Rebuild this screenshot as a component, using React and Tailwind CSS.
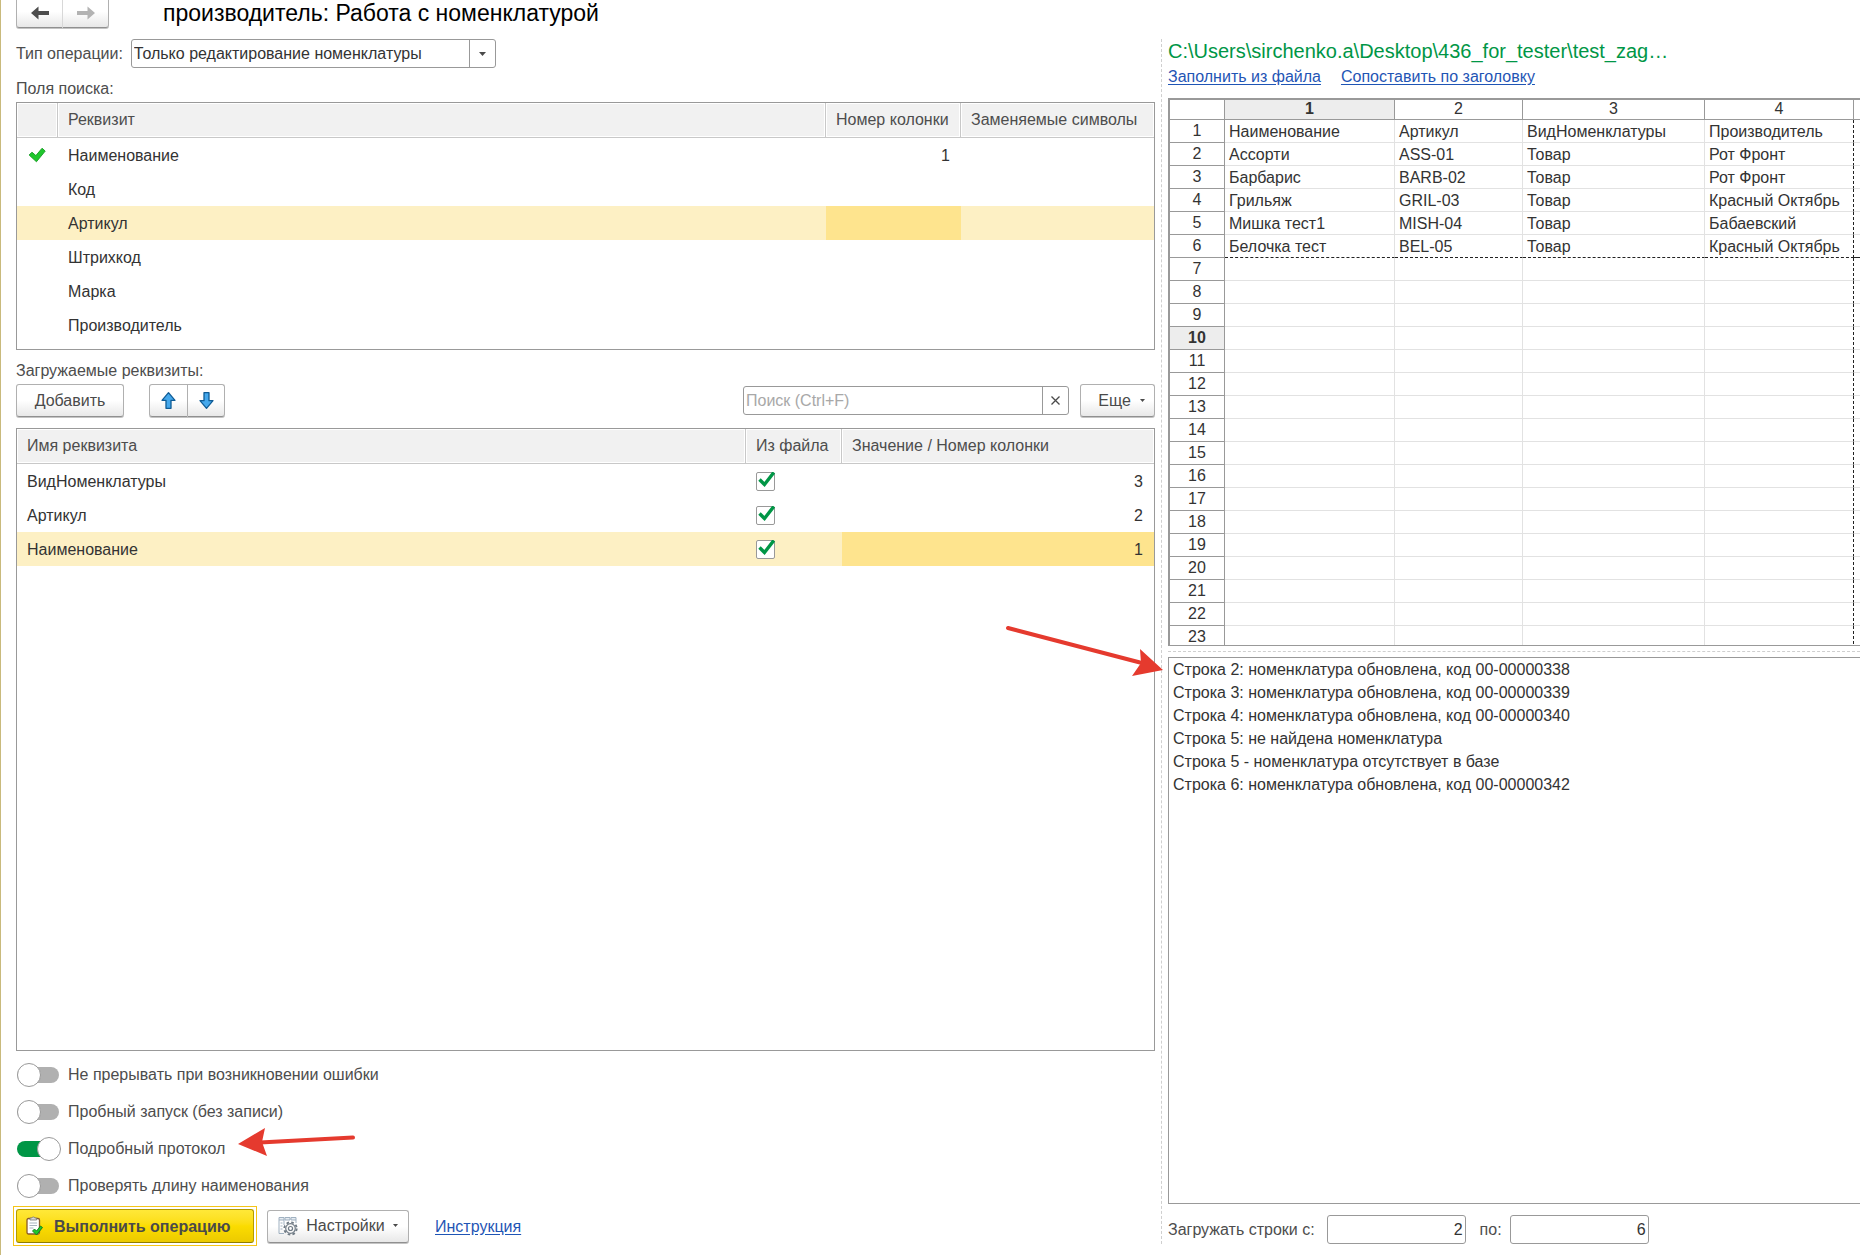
import { useState } from 'react'

const searchFields = [
  { name: 'Наименование', column: '1', active: true },
  { name: 'Код', column: '' },
  { name: 'Артикул', column: '', selected: true },
  { name: 'Штрихкод', column: '' },
  { name: 'Марка', column: '' },
  { name: 'Производитель', column: '' }
]

const loadedFields = [
  { name: 'ВидНоменклатуры', column: '3' },
  { name: 'Артикул', column: '2' },
  { name: 'Наименование', column: '1', selected: true }
]

const sheetRows = [
  ['Наименование', 'Артикул', 'ВидНоменклатуры', 'Производитель'],
  ['Ассорти', 'ASS-01', 'Товар', 'Рот Фронт'],
  ['Барбарис', 'BARB-02', 'Товар', 'Рот Фронт'],
  ['Грильяж', 'GRIL-03', 'Товар', 'Красный Октябрь'],
  ['Мишка тест1', 'MISH-04', 'Товар', 'Бабаевский'],
  ['Белочка тест', 'BEL-05', 'Товар', 'Красный Октябрь']
]

const logLines = [
  'Строка 2: номенклатура обновлена, код 00-00000338',
  'Строка 3: номенклатура обновлена, код 00-00000339',
  'Строка 4: номенклатура обновлена, код 00-00000340',
  'Строка 5: не найдена номенклатура',
  'Строка 5 - номенклатура отсутствует в базе',
  'Строка 6: номенклатура обновлена, код 00-00000342'
]

const switches = [
  { id: 'keepGoing', label: 'Не прерывать при возникновении ошибки' },
  { id: 'dryRun', label: 'Пробный запуск (без записи)' },
  { id: 'verbose', label: 'Подробный протокол', marked: true },
  { id: 'checkLength', label: 'Проверять длину наименования' }
]

const buttonClass =
  'flex items-center justify-center h-[33px] pb-px border border-[#b0b0b0] border-b-[#909090] rounded-[3px] bg-linear-to-b from-white from-50% to-[#e8e8e8] text-[#4a4a4a] shadow-[0_1px_0_#c4c4c4]'

const headClass = 'h-[35px] px-[10px] pb-[2px] text-left font-normal text-[#4d4d4d] bg-[#f1f1f1] bg-clip-padding border-b border-[#c8c8c8] shadow-[inset_0_0_0_1px_#fff]'

const Caret = ({ small }) => (
  <svg className={small ? 'w-[5px] h-[3px]' : 'w-[7px] h-1'} viewBox="0 0 7 4" aria-hidden="true">
    <path d="M0 0h7L3.500 4z" fill="#4a4a4a" />
  </svg>
)

const NavArrow = ({ forward }) => (
  <svg className="w-[18px] h-[14px] mt-1" viewBox="0 0 18 14" aria-hidden="true">
    {forward ? (
      <path d="M18 7L10.500 .5v4.500H0v4h10.500v4.500z" fill="#b3b3b3" />
    ) : (
      <path d="M0 7L7.500 .5v4.500H18v4H7.500v4.500z" fill="#4d4d4d" />
    )}
  </svg>
)

const MoveArrow = ({ down }) => (
  <svg className="w-[15px] h-[17px]" viewBox="0 0 15 17" aria-hidden="true">
    <path
      d={down ? 'M5 .7h5v8h4L7.500 16.300 1 8.700h4z' : 'M5 16.300h5v-8h4L7.500 .7 1 8.300h4z'}
      fill="#45a8ec"
      stroke="#0f5c96"
      strokeWidth="1.300"
      strokeLinejoin="round"
    />
  </svg>
)

const ActiveMark = () => (
  <svg className="w-[18px] h-4 ml-[11px]" viewBox="0 0 16 14" aria-hidden="true">
    <path d="M1 7l2.500-2.500 3.500 3L12.500 1 15.300 3.500 7.500 13z" fill="#1fc72c" stroke="#159a22" strokeWidth=".8" />
  </svg>
)

const ClipboardIcon = () => (
  <svg className="w-[17px] h-5" viewBox="0 0 17 20" aria-hidden="true">
    <rect x="1" y="2.500" width="12.500" height="15.500" rx="1.500" fill="#fff" stroke="#8a5a2b" strokeWidth="1.300" />
    <path d="M4 4V2h1.800a1.600 1.600 0 013 0h1.800v2z" fill="#d8d8d8" stroke="#777" strokeWidth=".8" />
    <path d="M3.500 7h7.500M3.500 9.500h7.500M3.500 12h4" stroke="#a9b4bf" strokeWidth="1" />
    <path d="M6.500 15l2-2 2 2 4-5 2 1.500-6 7.500z" fill="#1fc72c" stroke="#0e7d1a" strokeWidth=".9" />
  </svg>
)

const SettingsIcon = () => (
  <svg className="w-5 h-5" viewBox="0 0 20 20" fill="none" aria-hidden="true">
    <path d="M1 1.500h5v2.500H1zM7 1.500h5v2.500H7zM13 1.500h5v2.500h-5z" fill="#e6ecf2" stroke="#9fb0c0" />
    <path d="M1 4v13.500h5M6 4v5M18 4v3" stroke="#9fb0c0" />
    <path d="M2.500 7h2M2.500 10h2M2.500 13h2" stroke="#9fb0c0" />
    <circle cx="12.500" cy="12.500" r="6.200" stroke="#707b85" strokeWidth="1.800" strokeDasharray="2.600 2.270" />
    <circle cx="12.500" cy="12.500" r="4.800" fill="#f6f6f6" stroke="#707b85" strokeWidth="1.200" />
    <circle cx="12.500" cy="12.500" r="2" fill="#fff" stroke="#707b85" strokeWidth="1.200" />
  </svg>
)

const CheckBox = ({ label, checked, onChange }) => (
  <label className="grid w-5 h-5 mt-[2px]">
    <input
      type="checkbox"
      aria-label={label}
      checked={checked}
      onChange={onChange}
      className="col-start-1 row-start-1 appearance-none size-[19px] bg-white border border-[#999] rounded-[2px]"
    />
    {checked && (
      <svg className="col-start-1 row-start-1 w-5 h-[19px] pointer-events-none" viewBox="0 0 20 19" aria-hidden="true">
        <path d="M3.500 7.500l5 5L17.800 .5" fill="none" stroke="#009646" strokeWidth="3.400" />
      </svg>
    )}
  </label>
)

const Switch = ({ id, checked, onChange }) => (
  <input
    id={id}
    type="checkbox"
    role="switch"
    checked={checked}
    onChange={onChange}
    className="relative appearance-none w-[44px] h-6 shrink-0 before:absolute before:left-0 before:top-1 before:w-[42px] before:h-4 before:rounded-full before:bg-[#b0b0b0] checked:before:bg-[#009646] after:absolute after:left-0 after:top-0 after:size-6 after:rounded-full after:bg-white after:border after:border-[#999] checked:after:left-5"
  />
)

const App = () => {
  const [flags, setFlags] = useState({ verbose: true })
  const [fromFile, setFromFile] = useState([true, true, true])
  const [search, setSearch] = useState('')
  const [firstRow, setFirstRow] = useState('2')
  const [lastRow, setLastRow] = useState('6')

  const toggleFlag = (id) => setFlags(prev => ({ ...prev, [id]: !prev[id] }))
  const toggleFromFile = (index) => setFromFile(prev => prev.map((v, i) => (i === index ? !v : v)))

  return (
    <div className="grid grid-cols-[minmax(0,1160fr)_minmax(0,699fr)] h-screen min-h-[1000px] overflow-hidden bg-white border-l border-[#c9ba7c] font-['Liberation_Sans',Arial,sans-serif] text-[16px] leading-[23px] text-[#333]">
      <main className="flex flex-col min-h-0 pl-[15px] pr-[6px] pb-[9px]">
        <header className="flex items-start gap-[54px] h-[39px]">
          <nav className="flex -mt-[5px]">
            <button aria-label="Назад" className={`${buttonClass} w-[47px] rounded-r-none border-r-[#d8d8d8]`}>
              <NavArrow />
            </button>
            <button aria-label="Вперед" className={`${buttonClass} w-[46px] rounded-l-none border-l-0`}>
              <NavArrow forward />
            </button>
          </nav>
          <h1 className="text-[23px] leading-[26px] text-black whitespace-nowrap">производитель: Работа с номенклатурой</h1>
        </header>

        <div className="flex items-center gap-2">
          <label htmlFor="operation" className="text-[#4d4d4d] whitespace-nowrap">Тип операции:</label>
          <div className="flex items-center w-[365px] h-[29px] border border-[#999] rounded-[3px]">
            <select id="operation" className="appearance-none flex-1 h-full px-[2px] outline-none">
              <option>Только редактирование номенклатуры</option>
            </select>
            <span className="flex items-center justify-center w-[26px] h-full border-l border-[#999]">
              <Caret />
            </span>
          </div>
        </div>

        <h2 className="mt-[9px] mb-[2px] text-[#4d4d4d]">Поля поиска:</h2>
        <div className="h-[248px] shrink-0 border border-[#999] overflow-hidden">
          <table className="w-full table-fixed border-separate border-spacing-0">
            <colgroup>
              <col className="w-[41px]" />
              <col />
              <col className="w-[135px]" />
              <col className="w-[193px]" />
            </colgroup>
            <thead>
              <tr>
                <th className={`${headClass} border-r`} aria-label="Активно"></th>
                <th className={`${headClass} border-r`}>Реквизит</th>
                <th className={`${headClass} border-r whitespace-nowrap`}>Номер колонки</th>
                <th className={`${headClass} whitespace-nowrap`}>Заменяемые символы</th>
              </tr>
            </thead>
            <tbody>
              {searchFields.map((field) => (
                <tr key={field.name} className={field.selected ? 'bg-[#fdf0c4]' : ''}>
                  <td className="h-[34px]">{field.active && <ActiveMark />}</td>
                  <td className="px-[10px]">{field.name}</td>
                  <td className={`px-[11px] text-right ${field.selected ? 'bg-[#fee48e]' : ''}`}>{field.column}</td>
                  <td></td>
                </tr>
              ))}
            </tbody>
          </table>
        </div>

        <h2 className="mt-[9px] mb-[2px] text-[#4d4d4d]">Загружаемые реквизиты:</h2>
        <div className="flex items-center mb-[11px]">
          <button className={`${buttonClass} w-[108px]`}>Добавить</button>
          <div className="flex ml-[25px]">
            <button aria-label="Переместить вверх" className={`${buttonClass} w-[39px] rounded-r-none`}>
              <MoveArrow />
            </button>
            <button aria-label="Переместить вниз" className={`${buttonClass} w-[37px] rounded-l-none border-l-0`}>
              <MoveArrow down />
            </button>
          </div>
          <div className="flex w-[326px] h-[29px] ml-auto border border-[#999] rounded-[3px]">
            <input
              type="text"
              aria-label="Поиск"
              placeholder="Поиск (Ctrl+F)"
              value={search}
              onChange={(e) => setSearch(e.target.value)}
              className="flex-1 min-w-0 px-[2px] outline-none placeholder:text-[#a8a8a8]"
            />
            <button
              aria-label="Очистить"
              onClick={() => setSearch('')}
              className="flex items-center justify-center w-[26px] border-l border-[#999]"
            >
              <svg className="size-[9px]" viewBox="0 0 9 9" aria-hidden="true">
                <path d="M.5 .5l8 8M8.500 .5l-8 8" stroke="#4a4a4a" strokeWidth="1.300" />
              </svg>
            </button>
          </div>
          <button className={`${buttonClass} w-[75px] ml-[11px] gap-[9px] pl-2`}>
            Еще
            <Caret small />
          </button>
        </div>

        <div className="flex-1 min-h-0 border border-[#999] overflow-hidden">
          <table className="w-full table-fixed border-separate border-spacing-0">
            <colgroup>
              <col />
              <col className="w-[96px]" />
              <col className="w-[312px]" />
            </colgroup>
            <thead>
              <tr>
                <th className={`${headClass} border-r`}>Имя реквизита</th>
                <th className={`${headClass} border-r whitespace-nowrap`}>Из файла</th>
                <th className={headClass}>Значение / Номер колонки</th>
              </tr>
            </thead>
            <tbody>
              {loadedFields.map((field, index) => (
                <tr key={field.name} className={field.selected ? 'bg-[#fdf0c4]' : ''}>
                  <td className="h-[34px] px-[10px]">{field.name}</td>
                  <td className="px-[10px]">
                    <CheckBox
                      label={`Из файла: ${field.name}`}
                      checked={fromFile[index]}
                      onChange={() => toggleFromFile(index)}
                    />
                  </td>
                  <td className={`px-[11px] text-right ${field.selected ? 'bg-[#fee48e]' : ''}`}>{field.column}</td>
                </tr>
              ))}
            </tbody>
          </table>
        </div>

        <div className="mt-[5px] pl-px">
          {switches.map((item) => (
            <div key={item.id} className="flex items-center gap-[7px] h-[37px]">
              <Switch id={item.id} checked={!!flags[item.id]} onChange={() => toggleFlag(item.id)} />
              <label htmlFor={item.id} className="text-[#4d4d4d]">{item.label}</label>
              {item.marked && (
                <svg className="w-[118px] h-7 ml-[6px] -mt-[13px]" viewBox="0 0 118 28" aria-hidden="true">
                  <path d="M22 14.500L115 9.500" stroke="#e53a2e" strokeWidth="4" strokeLinecap="round" />
                  <path d="M0 16L27 0l-3 14 5 14z" fill="#e53a2e" />
                </svg>
              )}
            </div>
          ))}
        </div>

        <footer className="flex items-center -ml-[3px] mt-[2px]">
          <div className="p-[2px] border border-[#f5c518]">
            <button className="flex items-center gap-[11px] w-[238px] h-[34px] px-[9px] border border-[#b39b00] border-b-[#8f7c00] rounded-[3px] bg-linear-to-b from-[#ffe838] via-[#fbdc00] to-[#ecca00] font-bold text-[#4a4a4a] whitespace-nowrap">
              <ClipboardIcon />
              Выполнить операцию
            </button>
          </div>
          <button className={`${buttonClass} w-[142px] ml-[10px] gap-2`}>
            <SettingsIcon />
            Настройки
            <Caret small />
          </button>
          <a href="#help" className="ml-[26px] text-[#1f55b5] underline underline-offset-2">Инструкция</a>
        </footer>
      </main>

      <aside className="flex flex-col min-h-0 mt-[39px] mb-[11px] pl-[6px] border-l border-dashed border-[#cfcfcf]">
        <p className="text-[20px] leading-6 text-[#009646] whitespace-nowrap">
          C:\Users\sirchenko.a\Desktop\436_for_tester\test_zag…
        </p>
        <div className="flex gap-5 mt-[2px] mb-[10px] text-[#1f55b5] whitespace-nowrap">
          <a href="#fill" className="underline underline-offset-2">Заполнить из файла</a>
          <a href="#match" className="underline underline-offset-2">Сопоставить по заголовку</a>
        </div>

        <div className="h-[548px] shrink-0 border-l-2 border-t-2 border-b border-[#999] overflow-hidden">
          <table className="w-full table-fixed border-separate border-spacing-0">
            <colgroup>
              <col className="w-[55px]" />
              <col className="w-[170px]" />
              <col className="w-[128px]" />
              <col className="w-[182px]" />
              <col className="w-[149px]" />
              <col />
            </colgroup>
            <thead>
              <tr>
                <th className="h-5 leading-[17px] border-r border-b border-[#999]" aria-label="Строка"></th>
                {[1, 2, 3, 4].map((n) => (
                  <th
                    key={n}
                    className={`pb-[2px] leading-[17px] border-r border-b border-[#999] ${n === 1 ? 'bg-[#ededed] font-bold' : 'font-normal'}`}
                  >
                    {n}
                  </th>
                ))}
                <th className="border-b border-[#999]" aria-label="5"></th>
              </tr>
            </thead>
            <tbody>
              {Array.from({ length: 23 }, (_, r) => (
                <tr key={r}>
                  <th
                    className={`h-[23px] leading-[22px] border-r border-b border-[#999] ${r === 9 ? 'bg-[#ededed] font-bold' : 'font-normal'}`}
                  >
                    {r + 1}
                  </th>
                  {[0, 1, 2, 3].map((c) => (
                    <td
                      key={c}
                      className={`pl-1 pt-[2px] leading-5 border-r border-b whitespace-nowrap ${r === 5 ? 'border-b-[#222] [border-bottom-style:dashed]' : 'border-b-[#e2e2e2]'} ${c === 3 ? 'border-r-[#222] [border-right-style:dashed]' : 'border-r-[#e2e2e2]'}`}
                    >
                      {sheetRows[r]?.[c]}
                    </td>
                  ))}
                  <td className={r === 5 ? 'border-b border-dashed border-[#222]' : 'border-b border-[#e2e2e2]'}></td>
                </tr>
              ))}
            </tbody>
          </table>
        </div>

        <div className="my-[5px] border-t border-dashed border-[#cfcfcf]"></div>

        <div className="relative flex-1 min-h-0 pl-1 border border-r-0 border-[#999]">
          {logLines.map((line) => (
            <p key={line} className="whitespace-nowrap">{line}</p>
          ))}
          <svg className="absolute -left-[165px] -top-[34px] w-[160px] h-[56px] pointer-events-none" viewBox="0 0 160 56" aria-hidden="true">
            <path d="M4 4L136 38.500" stroke="#e53a2e" strokeWidth="4" strokeLinecap="round" />
            <path d="M159 46L136 25l1 14-9 13z" fill="#e53a2e" />
          </svg>
        </div>

        <div className="flex items-center mt-[11px] text-[#4d4d4d] whitespace-nowrap">
          <label htmlFor="firstRow">Загружать строки с:</label>
          <input
            id="firstRow"
            value={firstRow}
            onChange={(e) => setFirstRow(e.target.value)}
            className="w-[139px] h-[29px] ml-3 px-[2px] border border-[#999] rounded-[3px] text-right text-[#333]"
          />
          <label htmlFor="lastRow" className="ml-[14px]">по:</label>
          <input
            id="lastRow"
            value={lastRow}
            onChange={(e) => setLastRow(e.target.value)}
            className="w-[139px] h-[29px] ml-2 px-[2px] border border-[#999] rounded-[3px] text-right text-[#333]"
          />
        </div>
      </aside>
    </div>
  )
}

export default App
